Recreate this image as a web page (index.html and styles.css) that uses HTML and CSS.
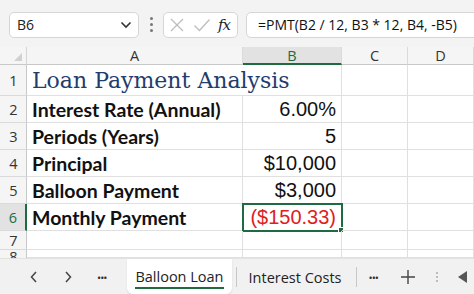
FILE: index.html
```html
<!DOCTYPE html>
<html>
<head>
<meta charset="utf-8">
<link rel="stylesheet" href="styles.css">
</head>
<body>
<div class="app">
  <div class="toolbar">
    <div class="namebox"><span>B6</span>
      <svg class="chev" width="12" height="8" viewBox="0 0 12 8"><path d="M1.5 1.5 L6 6 L10.5 1.5" fill="none" stroke="#333" stroke-width="1.6"/></svg>
    </div>
    <div class="vdots"><i></i><i></i><i></i></div>
    <div class="fxbox">
      <svg width="16" height="16" viewBox="0 0 16 16"><path d="M2 2 L14 14 M14 2 L2 14" stroke="#bdbdbd" stroke-width="1.3" fill="none"/></svg>
      <svg width="18" height="16" viewBox="0 0 18 16"><path d="M1.5 8.5 L6.5 13.5 L16.5 2.5" stroke="#bdbdbd" stroke-width="1.3" fill="none"/></svg>
      <span class="fx">fx</span>
    </div>
    <div class="formula">=PMT(B2 / 12, B3 * 12, B4, -B5)</div>
  </div>
  <div class="sheet">
    <div class="corner"><svg width="8" height="8" viewBox="0 0 8 8"><path d="M8 0 L8 8 L0 8 Z" fill="#d0d0d0"/></svg></div>
    <div class="ch">A</div>
    <div class="ch sel">B</div>
    <div class="ch">C</div>
    <div class="ch">D</div>

    <div class="rh">1</div>
    <div class="c title">Loan Payment Analysis</div>
    <div class="c nb"></div>
    <div class="c"></div>
    <div class="c"></div>

    <div class="rh">2</div>
    <div class="c lbl">Interest Rate (Annual)</div>
    <div class="c num">6.00%</div>
    <div class="c"></div>
    <div class="c"></div>

    <div class="rh">3</div>
    <div class="c lbl">Periods (Years)</div>
    <div class="c num">5</div>
    <div class="c"></div>
    <div class="c"></div>

    <div class="rh">4</div>
    <div class="c lbl">Principal</div>
    <div class="c num">$10,000</div>
    <div class="c"></div>
    <div class="c"></div>

    <div class="rh">5</div>
    <div class="c lbl">Balloon Payment</div>
    <div class="c num">$3,000</div>
    <div class="c"></div>
    <div class="c"></div>

    <div class="rh selr">6</div>
    <div class="c lbl">Monthly Payment</div>
    <div class="c num neg active">($150.33)<span class="handle"></span></div>
    <div class="c"></div>
    <div class="c"></div>

    <div class="rh">7</div>
    <div class="c"></div>
    <div class="c"></div>
    <div class="c"></div>
    <div class="c"></div>

    <div class="rh r8"><span>8</span></div>
    <div class="c"></div>
    <div class="c"></div>
    <div class="c"></div>
    <div class="c"></div>
  </div>
  <div class="tabbar">
    <svg class="nav" width="10" height="14" viewBox="0 0 10 14"><path d="M7 2 L2.5 7 L7 12" fill="none" stroke="#444" stroke-width="1.5"/></svg>
    <svg class="nav" width="10" height="14" viewBox="0 0 10 14"><path d="M3 2 L7.5 7 L3 12" fill="none" stroke="#444" stroke-width="1.5"/></svg>
    <span class="more">•••</span>
    <div class="tab active"><span>Balloon Loan</span></div>
    <div class="sep"></div>
    <div class="tab"><span>Interest Costs</span></div>
    <div class="sep"></div>
    <span class="more m2">•••</span>
    <svg class="plus" width="16" height="16" viewBox="0 0 16 16"><path d="M8 1 V15 M1 8 H15" stroke="#444" stroke-width="1.4"/></svg>
    <div class="vdots small"><i></i><i></i><i></i></div>
    <svg class="tri" width="9" height="12" viewBox="0 0 9 12"><path d="M9 0 L9 12 L0 6 Z" fill="#555"/></svg>
  </div>
</div>
</body>
</html>
```

FILE: styles.css
```css
* { box-sizing: border-box; }
html, body { margin: 0; padding: 0; }
body { width: 474px; height: 294px; overflow: hidden; background: #fff; font-family: "Open Sans", "Noto Sans", sans-serif; }
.app { display: flex; flex-direction: column; width: 474px; height: 294px; }

.toolbar { height: 47px; flex: none; background: #f3f3f3; display: flex; align-items: center; padding: 2px 0 0 9px; }
.namebox { width: 130px; height: 26px; background: #fff; border: 1px solid #d6d6d6; border-radius: 5px; display: flex; align-items: center; justify-content: space-between; padding: 0 6px 0 7px; font-size: 14px; color: #222; }
.chev { margin-top: 1px; }
.vdots { width: 24px; display: flex; flex-direction: column; align-items: center; gap: 3px; }
.vdots i { width: 3px; height: 3px; border-radius: 50%; background: #777; display: block; }
.fxbox { width: 75px; height: 26px; background: #fff; border: 1px solid #d6d6d6; border-radius: 5px; display: flex; align-items: center; gap: 8px; padding-left: 5px; }
.fx { font-family: "DejaVu Serif", serif; font-style: italic; font-size: 15px; color: #222; margin-left: -1px; letter-spacing: -1px; }
.formula { flex: 1; margin-left: 8px; margin-right: -12px; height: 26px; background: #fff; border: 1px solid #d6d6d6; border-radius: 5px; display: flex; align-items: center; padding-left: 11px; font-size: 14px; color: #111; white-space: nowrap; }

.sheet { flex: none; display: grid; grid-template-columns: 27px 216px 99px 66px 1fr; grid-template-rows: 18px 31px 27px 27px 27px 27px 27px 19px 8px; height: 211px; overflow: hidden; }
.corner { background: #f5f5f5; border-right: 1px solid #d4d4d4; border-bottom: 1px solid #c8c8c8; display: flex; align-items: flex-end; justify-content: flex-end; padding: 0 4px 3px 0; }
.ch { background: #f5f5f5; border-right: 1px solid #dadada; border-bottom: 1px solid #c8c8c8; font-size: 14.5px; color: #333; display: flex; align-items: center; justify-content: center; }
.ch.sel { background: #e2e2e2; color: #1e6b41; border-bottom: 2px solid #1e6b41; }
.rh { background: #f5f5f5; border-right: 1px solid #c8c8c8; border-bottom: 1px solid #dadada; font-size: 14.5px; color: #333; display: flex; align-items: center; justify-content: center; padding-left: 1px; overflow: hidden; }
.rh.selr { background: #e2e2e2; color: #1e6b41; border-right: 2px solid #1e6b41; }
.rh.r8 { align-items: flex-start; line-height: 14px; border-bottom: none; }
.c { border-right: 1px solid #e0e0e0; border-bottom: 1px solid #e0e0e0; display: flex; align-items: center; white-space: nowrap; position: relative; }
.c.title { font-family: "DejaVu Serif", serif; font-size: 22px; color: #233c6e; padding-left: 5px; overflow: visible; z-index: 1; border-right: none; }
.c.lbl { font-family: "Lato", sans-serif; font-weight: bold; font-size: 19.5px; color: #111; padding-left: 5px; }
.c.num { font-family: "Liberation Sans", Arial, sans-serif; font-size: 20px; color: #111; justify-content: flex-end; padding-right: 5px; }
.c.neg { color: #e02020; }
.c.active { outline: 2px solid #1e6b41; outline-offset: -1px; }
.handle { position: absolute; right: -3px; bottom: -3px; width: 6px; height: 6px; background: #1e6b41; border: 1px solid #fff; }

.tabbar { flex: 1; background: #f1f1f1; display: flex; align-items: center; padding-left: 29px; border-top: 1px solid #e2e2e2; }
.nav { margin-right: 24px; }
.more { font-size: 11px; color: #333; letter-spacing: -1px; }
.tab { height: 36px; display: flex; align-items: center; font-size: 14.5px; color: #222; }
.tab.active { background: #fff; border-radius: 0 0 6px 6px; margin-left: 21px; padding: 0 8px; align-self: flex-start; height: 35px; box-shadow: 0 1px 2px rgba(0,0,0,0.1); }
.tab.active span { border-bottom: 2px solid #1e6b41; padding-bottom: 1px; margin-top: 2px; }
.sep { width: 1px; height: 20px; background: #c8c8c8; margin-left: 4px; }
.tab:not(.active) { margin-left: 12px; padding: 0; }
.tab:not(.active) + .sep { margin-left: 14px; }
.m2 { margin-left: 12px; }
.plus { margin-left: 22px; }
.vdots.small { width: 10px; margin-left: 16px; gap: 2px; }
.vdots.small i { width: 2px; height: 2px; background: #aaa; }
.tri { margin-left: 16px; }
```
